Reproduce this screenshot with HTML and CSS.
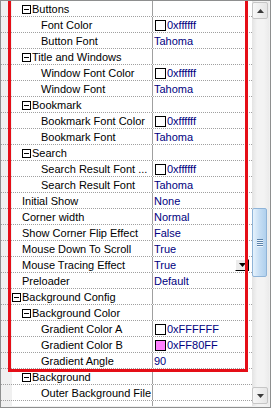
FILE: index.html
```html
<!DOCTYPE html>
<html lang="en">

<head>
  <meta charset="UTF-8">
  <title>Settings</title>
  <link rel="stylesheet" href="styles.css">
</head>

<body>
  <div class="grid">
    <div class="rows">
      <div class="row cat l1"><div class="name"><span class="toggle"></span>Buttons</div><div class="value"></div></div>
      <div class="row l2"><div class="name">Font Color</div><div class="value"><span class="swatch"></span>0xffffff</div></div>
      <div class="row l2"><div class="name">Button Font</div><div class="value">Tahoma</div></div>
      <div class="row cat l1"><div class="name"><span class="toggle"></span>Title and Windows</div><div class="value"></div></div>
      <div class="row l2"><div class="name">Window Font Color</div><div class="value"><span class="swatch"></span>0xffffff</div></div>
      <div class="row l2"><div class="name">Window Font</div><div class="value">Tahoma</div></div>
      <div class="row cat l1"><div class="name"><span class="toggle"></span>Bookmark</div><div class="value"></div></div>
      <div class="row l2"><div class="name">Bookmark Font Color</div><div class="value"><span class="swatch"></span>0xffffff</div></div>
      <div class="row l2"><div class="name">Bookmark Font</div><div class="value">Tahoma</div></div>
      <div class="row cat l1"><div class="name"><span class="toggle"></span>Search</div><div class="value"></div></div>
      <div class="row l2"><div class="name">Search Result Font ...</div><div class="value"><span class="swatch"></span>0xffffff</div></div>
      <div class="row l2"><div class="name">Search Result Font</div><div class="value">Tahoma</div></div>
      <div class="row l1"><div class="name">Initial Show</div><div class="value">None</div></div>
      <div class="row l1"><div class="name">Corner width</div><div class="value">Normal</div></div>
      <div class="row l1"><div class="name">Show Corner Flip Effect</div><div class="value">False</div></div>
      <div class="row l1"><div class="name">Mouse Down To Scroll</div><div class="value">True</div></div>
      <div class="row l1"><div class="name">Mouse Tracing Effect</div><div class="value">True<span class="drop"><svg width="7" height="4" viewBox="0 0 7 4"><path d="M0 0h7L3.5 4z" fill="#000"/></svg></span></div></div>
      <div class="row l1"><div class="name">Preloader</div><div class="value">Default</div></div>
      <div class="row cat l0"><div class="name"><span class="toggle"></span>Background Config</div><div class="value"></div></div>
      <div class="row cat l1"><div class="name"><span class="toggle"></span>Background Color</div><div class="value"></div></div>
      <div class="row l2"><div class="name">Gradient Color A</div><div class="value"><span class="swatch"></span>0xFFFFFF</div></div>
      <div class="row l2"><div class="name">Gradient Color B</div><div class="value"><span class="swatch pink"></span>0xFF80FF</div></div>
      <div class="row l2"><div class="name">Gradient Angle</div><div class="value">90</div></div>
      <div class="row cat l1"><div class="name"><span class="toggle"></span>Background</div><div class="value"></div></div>
      <div class="row l2"><div class="name">Outer Background File</div><div class="value"></div></div>
      <div class="row l2"><div class="name"></div><div class="value"></div></div>
    </div>

    <div class="scrollbar">
      <div class="sb-btn up"><svg width="7" height="4" viewBox="0 0 7 4"><path d="M3.5 0L7 4H0z" fill="#3a3a3a"/></svg></div>
      <div class="sb-track">
        <div class="sb-thumb"><span></span><span></span><span></span><span></span></div>
      </div>
      <div class="sb-btn down"><svg width="7" height="4" viewBox="0 0 7 4"><path d="M0 0h7L3.5 4z" fill="#3a3a3a"/></svg></div>
    </div>

    <!-- annotation frame drawn over the grid -->
    <div class="mark"></div>
  </div>
</body>

</html>
```

FILE: styles.css
```css
/* Page */
body {
  margin: 0;
  font-family: "Liberation Sans", Arial, sans-serif;
  font-size: 11px;
  background: #fff;
}

/* Property grid frame */
.grid {
  position: relative;
  display: flex;
  width: 271px;
  height: 408px;
  box-sizing: border-box;
  border: 1px solid #8e8f8f;
  padding: 0 1px 1px 0;
  overflow: hidden;
  background: #f0f0f0;
}

.rows {
  flex: 1;
  overflow: hidden;
  background: linear-gradient(to right, #f0f0f0 11px, #fff 11px);
}

/* Rows */
.row {
  display: flex;
  height: 16px;
  box-sizing: border-box;
  border-bottom: 1px dotted #a0a0a0;
}

.name {
  width: 152px;
  box-sizing: border-box;
  border-right: 1px solid #a0a0a0;
  padding-top: 1px;
  line-height: 14px;
  white-space: nowrap;
  overflow: hidden;
  color: #000;
}

.value {
  flex: 1;
  display: flex;
  align-items: center;
  padding-top: 1px;
  padding-left: 1px;
  line-height: 14px;
  white-space: nowrap;
  color: #000080;
}

.l0 .name {
  padding-left: 11px;
}

.l1 .name {
  padding-left: 21px;
}

.l2 .name {
  padding-left: 40px;
}

/* Expand / collapse box */
.toggle {
  position: relative;
  display: inline-block;
  width: 9px;
  height: 9px;
  box-sizing: border-box;
  border: 1px solid #000;
  background: #fff;
  margin-right: 1px;
  vertical-align: -1px;
}

.toggle::after {
  content: "";
  position: absolute;
  left: 1px;
  right: 1px;
  top: 3px;
  height: 1px;
  background: #000;
}

/* Colour swatch */
.swatch {
  width: 11px;
  height: 11px;
  box-sizing: border-box;
  border: 1px solid #000;
  background: #fff;
  margin: 0 1px;
}

.swatch.pink {
  background: #ff80ff;
}

/* Combo button */
.drop {
  display: flex;
  align-items: center;
  justify-content: center;
  margin-left: auto;
  margin-right: 3px;
  width: 14px;
  height: 12px;
  box-sizing: border-box;
  border: 1px solid;
  border-color: #fff #000 #000 #fff;
  background: #ececec;
}

/* Scrollbar */
.scrollbar {
  width: 17px;
  display: flex;
  flex-direction: column;
  background: linear-gradient(to right, #e3e3e3, #f3f3f3 30%, #f3f3f3 70%, #ebebeb);
}

.sb-btn {
  display: flex;
  align-items: center;
  justify-content: center;
  height: 17px;
  margin: 1px 1px 0 0;
  box-sizing: border-box;
  border: 1px solid #c6c6c6;
  border-radius: 2px;
  background: linear-gradient(to right, #f7f7f7, #e6e6e6);
}

.sb-btn.down {
  margin: 0 1px 2px 0;
}

.sb-track {
  flex: 1;
}

.sb-thumb {
  display: flex;
  flex-direction: column;
  align-items: center;
  justify-content: center;
  gap: 1px;
  margin: 189px 2px 0 0;
  height: 69px;
  box-sizing: border-box;
  border: 1px solid #8fb4d8;
  border-radius: 2px;
  background: linear-gradient(to right, #e6f2fc, #c6def4 50%, #b0d0ed);
}

.sb-thumb span {
  width: 6px;
  height: 1px;
  background: #5b82aa;
  box-shadow: 0 1px 0 #eef6fd;
}

/* Annotation frame */
.mark {
  position: absolute;
  left: 7px;
  top: -11px;
  width: 240px;
  height: 382px;
  box-sizing: border-box;
  border: 3px solid #e50e17;
  pointer-events: none;
}
```
